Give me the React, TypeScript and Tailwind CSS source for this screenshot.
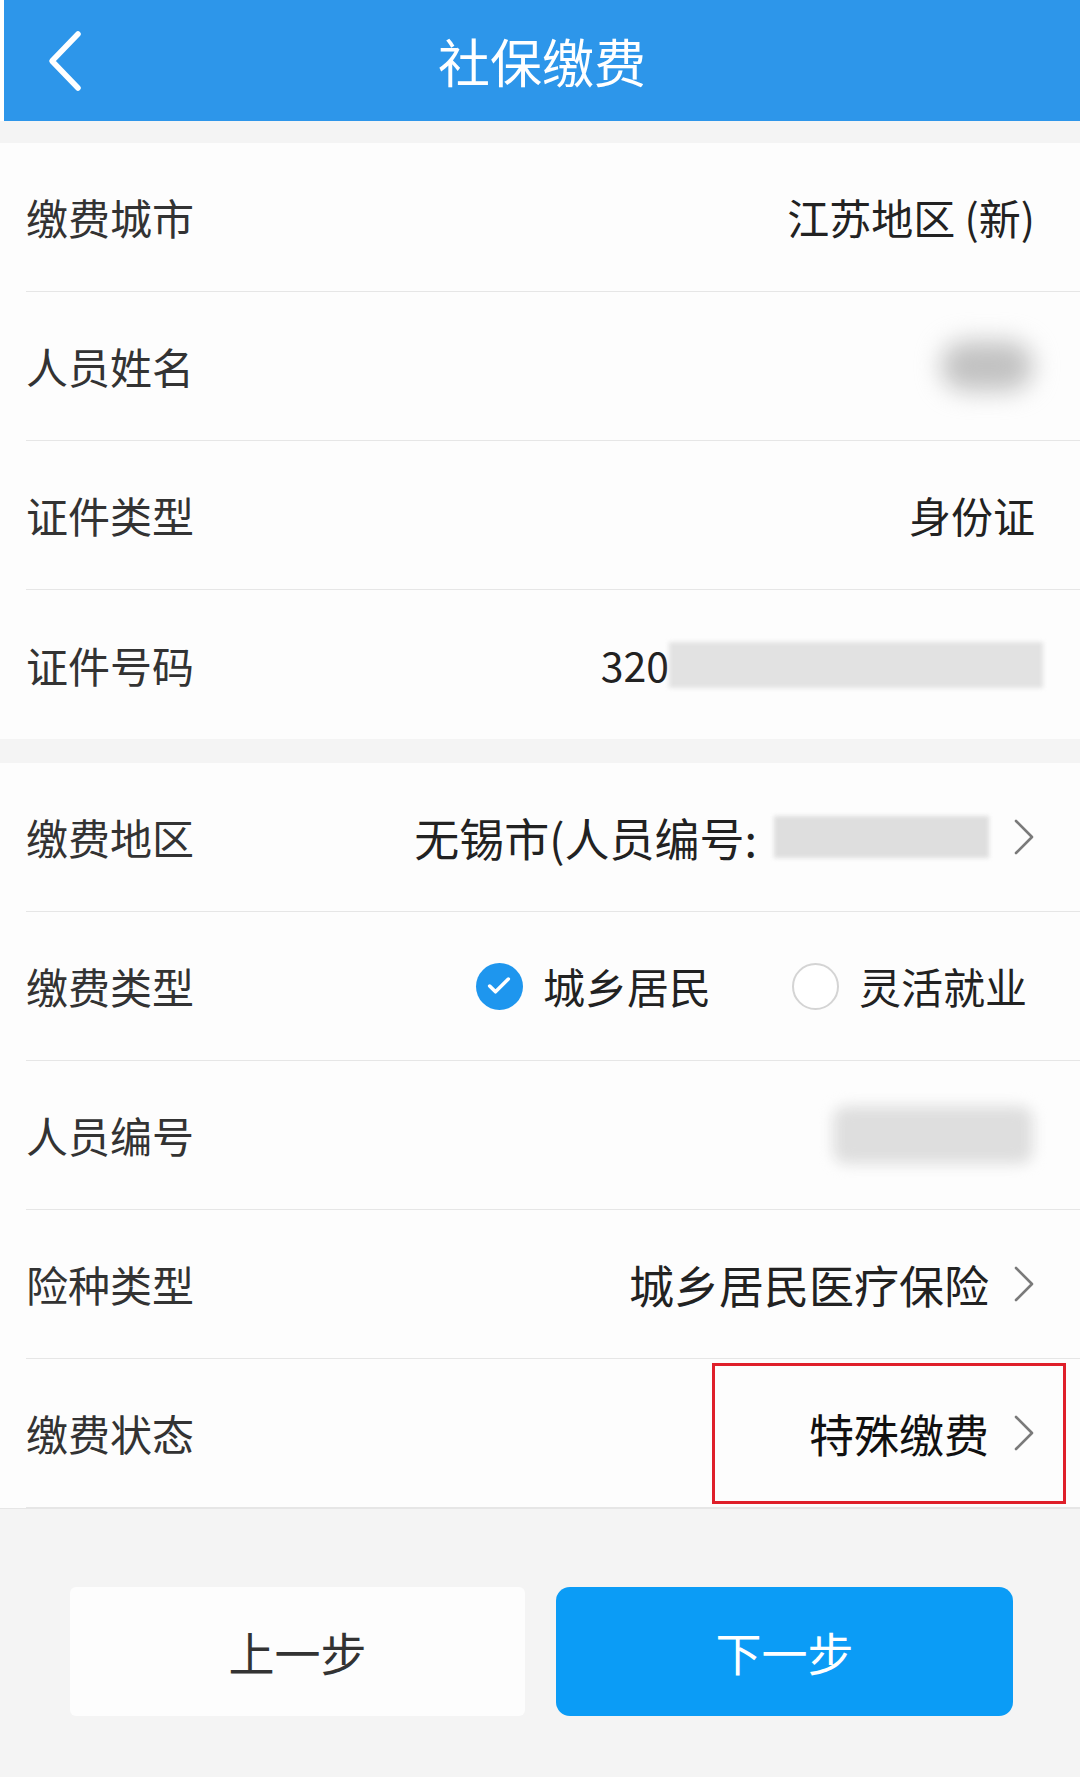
import { Check } from "lucide-react";

const FONT = { fontFamily: '"Noto Sans CJK SC", "Noto Sans", sans-serif' };

function Chevron() {
  return (
    <svg width="22" height="38" viewBox="0 0 22 38" className="ml-[24px] shrink-0">
      <path d="M3 3 L19 19 L3 35" fill="none" stroke="#7a7a7a" strokeWidth="2.6" strokeLinecap="round" strokeLinejoin="round" />
    </svg>
  );
}

function Row({
  label,
  children,
  last = false,
  big = false,
  extra,
}: {
  label: string;
  children?: React.ReactNode;
  last?: boolean;
  big?: boolean;
  extra?: React.ReactNode;
}) {
  return (
    <div className={`relative ml-[26px] flex h-[149px] items-center pr-[45px] ${last ? "" : "border-b border-[#e6e6e6]"}`}>
      <span className="text-[42px] leading-none text-[#333]">{label}</span>
      <div className={`ml-auto flex items-center leading-none text-[#222] ${big ? "text-[45px]" : "text-[42px]"}`}>{children}</div>
      {extra}
    </div>
  );
}

export default function App() {
  return (
    <div className="flex min-h-[1777px] w-[1080px] flex-col bg-white" style={FONT}>
      {/* Header */}
      <div className="relative ml-[4px] flex h-[121px] items-center justify-center bg-[#2d96ea]">
        <svg width="40" height="64" viewBox="0 0 40 64" className="absolute left-[40px] top-[29px]">
          <path d="M34 5 L8 32 L34 59" fill="none" stroke="#fff" strokeWidth="5.5" strokeLinecap="round" strokeLinejoin="round" />
        </svg>
        <span className="text-[52px] leading-none text-white">社保缴费</span>
      </div>

      <div className="h-[22px] bg-[#f4f4f4]" />

      {/* Section 1 */}
      <div className="bg-[#fdfdfd]">
        <Row label="缴费城市">江苏地区 (新)</Row>
        <Row label="人员姓名">
          <div className="mr-[2px] h-[50px] w-[92px] rounded-full bg-[#c2c2c2] blur-[12px]" />
        </Row>
        <Row label="证件类型">身份证</Row>
        <Row label="证件号码" last>
          <span className="text-[41px]">320</span>
          <div className="mr-[-8px] h-[46px] w-[374px] bg-[#e2e2e2] blur-[2px]" />
        </Row>
      </div>

      <div className="h-[24px] bg-[#f4f4f4]" />

      {/* Section 2 */}
      <div className="bg-[#fdfdfd]">
        <Row label="缴费地区" big>
          <span>无锡市(人员编号:</span>
          <div className="ml-[17px] h-[42px] w-[215px] bg-[#dedede] blur-[2px]" />
          <Chevron />
        </Row>
        <Row label="缴费类型">
          <div className="flex h-[47px] w-[47px] items-center justify-center rounded-full bg-[#1e96ee]">
            <Check size={28} color="#fff" strokeWidth={3} />
          </div>
          <span className="ml-[20px]">城乡居民</span>
          <div className="ml-[81px] h-[47px] w-[47px] rounded-full border-2 border-[#d4d4d4] bg-white" />
          <span className="mr-[8px] ml-[20px]">灵活就业</span>
        </Row>
        <Row label="人员编号">
          <div className="mr-[2px] h-[58px] w-[200px] rounded-[14px] bg-[#dedede] blur-[7px]" />
        </Row>
        <Row label="险种类型" big>
          <span>城乡居民医疗保险</span>
          <Chevron />
        </Row>
        <Row
          label="缴费状态"
          big
          extra={<div className="absolute top-[4px] bottom-[3px] left-[686px] w-[354px] border-[3px] border-[#df1f2a]" />}
        >
          <span className="text-[#111]">特殊缴费</span>
          <Chevron />
        </Row>
      </div>

      {/* Bottom buttons */}
      <div className="flex flex-1 gap-[31px] border-t border-[#e6e6e6] bg-[#f4f4f4] pt-[78px] pr-[67px] pl-[70px]">
        <button className="flex h-[129px] w-[455px] items-center justify-center rounded-[6px] bg-[#fdfdfd] text-[46px] text-[#333]">
          上一步
        </button>
        <button className="flex h-[129px] w-[457px] items-center justify-center rounded-[14px] bg-[#0b9cf6] text-[46px] text-white">
          下一步
        </button>
      </div>
    </div>
  );
}
